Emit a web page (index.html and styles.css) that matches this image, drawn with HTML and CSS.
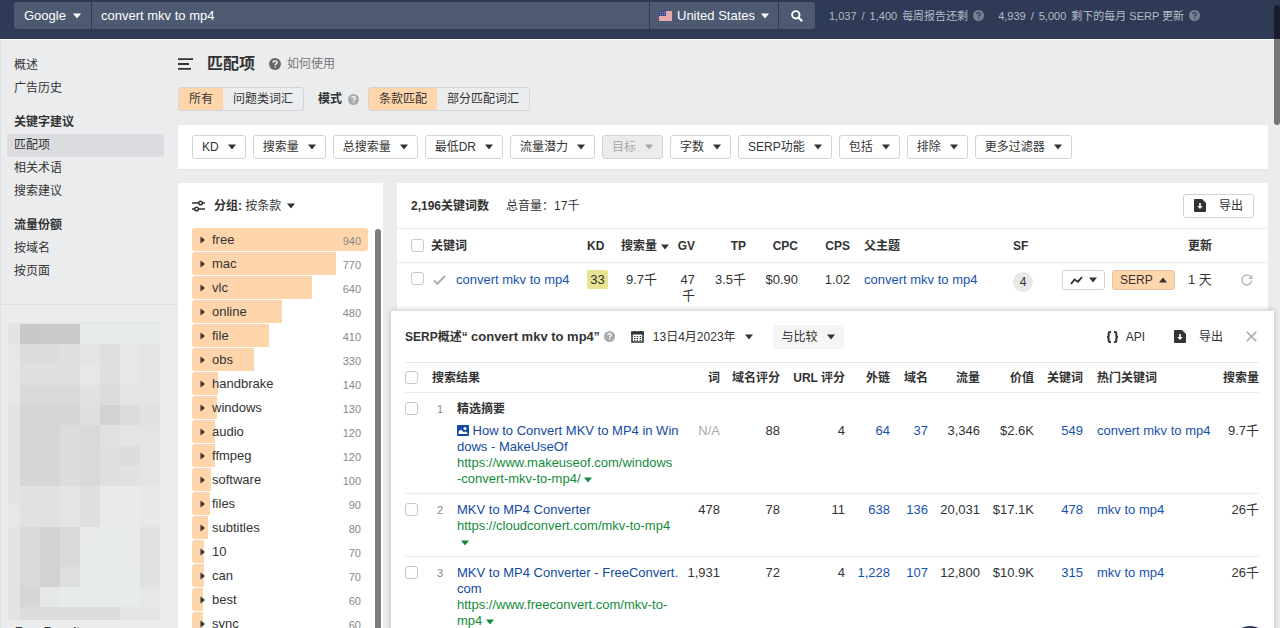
FILE: index.html
```html
<!DOCTYPE html>
<html lang="zh-CN">
<head>
<meta charset="utf-8">
<title>匹配项 - convert mkv to mp4</title>
<link rel="stylesheet" href="styles.css">
</head>
<body>
<svg class="defs" aria-hidden="true">
  <symbol id="down" viewBox="0 0 8 6"><path d="M0 0.5h8L4 5.5z" fill="currentColor"/></symbol>
  <symbol id="up" viewBox="0 0 8 6"><path d="M0 5.5h8L4 0.5z" fill="currentColor"/></symbol>
  <symbol id="right" viewBox="0 0 6 8"><path d="M0.5 0.5v7L5 4z" fill="currentColor"/></symbol>
  <symbol id="help" viewBox="0 0 12 12"><circle cx="6" cy="6" r="6" fill="currentColor" stroke="none"/><path d="M4.1 4.7C4.1 3.5 4.9 2.9 6 2.9s2 .7 2 1.7C8 5.8 6.2 5.9 6.2 7.2M6.2 8.2v1.4" fill="none" stroke-width="1.4"/></symbol>
  <symbol id="file" viewBox="0 0 12 13"><path d="M1 0h7l4 4v8q0 1-1 1H1q-1 0-1-1V1q0-1 1-1z" fill="currentColor"/><path d="M5.2 4h1.6v3h1.9L6 10 3.300 7h1.900z" fill="#fff"/></symbol>
</svg>
<div class="app">
  <header class="topbar">
    <form class="search">
      <label class="seg engine"><select aria-label="搜索引擎"><option>Google</option></select><svg class="caret"><use href="#down"/></svg></label>
      <input class="seg query" type="text" aria-label="关键词" value="convert mkv to mp4">
      <label class="seg country">
        <svg class="flag" viewBox="0 0 13 10"><path fill="#f3c4c8" d="M0 0h13v10H0z"/><path d="M0 1h13M0 3h13M0 5h13M0 7h13M0 9h13" stroke="#dc8690"/><path fill="#3d4c86" d="M0 0h7v5H0z"/><path d="M1 1.500h5M1 3.500h5" stroke="#8d98bd" stroke-dasharray="1 1"/></svg>
        <select aria-label="国家"><option>United States</option></select><svg class="caret"><use href="#down"/></svg>
      </label>
      <button class="seg go" type="button" aria-label="搜索"><svg width="12" height="12" viewBox="0 0 12 12"><circle cx="4.800" cy="4.800" r="3.700" fill="none" stroke="currentColor" stroke-width="1.900"/><path d="M7.500 7.500l3.700 3.700" stroke="currentColor" stroke-width="2.200"/></svg></button>
    </form>
    <div class="quota"><span>1,037</span><span>/</span><span>1,400</span><span>每周报告还剩</span><svg class="help"><use href="#help"/></svg></div>
    <div class="quota"><span>4,939</span><span>/</span><span>5,000</span><span>剩下的每月 SERP 更新</span><svg class="help"><use href="#help"/></svg></div>
  </header>
  <div class="body">
    <aside class="side">
      <nav>
        <a href="#">概述</a>
        <a href="#">广告历史</a>
        <h2>关键字建议</h2>
        <a href="#" class="on">匹配项</a>
        <a href="#">相关术语</a>
        <a href="#">搜索建议</a>
        <h2>流量份额</h2>
        <a href="#">按域名</a>
        <a href="#">按页面</a>
      </nav>
      <svg class="mosaic" viewBox="0 0 158 298" shape-rendering="crispEdges">
        <path fill="#e6e7e9" d="M0 0h152v298H0z"/>
        <path fill="#e2e3e5" d="M0 2h12v20H0zM0 83h12v100H0zM0 205h12v93H0z"/>
        <path fill="#e7ebec" d="M72 2h80v20H72zM72 205h60v80H72zM52 265h80v20H52z"/>
        <path fill="#c7c8ca" d="M12 2h20v20H12z"/><path fill="#cacbcd" d="M32 2h40v20H32z"/>
        <path fill="#dbdcde" d="M12 22h40v20H12zM92 63h20v20H92zM112 83h20v20H112zM112 124h20v20H112zM52 103h20v61H52zM12 285h100v13H12z"/>
        <path fill="#dedfe1" d="M52 22h20v41H52zM12 42h40v21H12zM92 22h20v41H92zM92 124h20v40H92zM72 164h20v41H72zM72 83h20v20H72zM52 245h20v20H52z"/>
        <path fill="#d8d9db" d="M12 63h60v20H12zM72 103h20v61H72zM12 205h20v60H12zM52 205h20v40H52z"/>
        <path fill="#d5d6d8" d="M12 83h40v81H12zM52 83h20v20H52zM12 265h20v20H12z"/>
        <path fill="#d1d2d4" d="M92 83h20v20H92zM32 205h20v60H32z"/>
        <path fill="#e0e1e3" d="M72 63h20v20H72zM132 83h20v20H132zM92 103h20v21H92zM12 164h40v41H12zM132 205h20v60H132zM112 144h20v20H112z"/>
        <path fill="#e3e4e6" d="M72 22h20v20H72zM132 22h20v61H132zM112 63h20v20H112zM112 103h20v21H112zM132 103h20v61H132zM52 164h20v41H52zM112 285h40v13H112z"/>
        <path fill="#e9eaec" d="M92 164h40v41H92zM72 205h20v20H72zM112 205h20v40H112z"/>
      </svg>
      <p class="foot">Free Results</p>
    </aside>
    <main class="main">
      <div class="title">
        <svg width="15" height="12" viewBox="0 0 15 12"><path d="M0 1.200h15M0 6h11M0 10.800h13" stroke="#333" stroke-width="1.800"/></svg>
        <h1>匹配项</h1>
        <a href="#"><svg class="help"><use href="#help"/></svg>如何使用</a>
      </div>
      <div class="modes">
        <div class="toggle"><button class="on" type="button">所有</button><button type="button">问题类词汇</button></div>
        <b>模式</b><svg class="help"><use href="#help"/></svg>
        <div class="toggle"><button class="on" type="button">条款匹配</button><button type="button">部分匹配词汇</button></div>
      </div>
      <div class="filters">
        <button class="btn" type="button">KD<svg class="caret"><use href="#down"/></svg></button>
        <button class="btn" type="button">搜索量<svg class="caret"><use href="#down"/></svg></button>
        <button class="btn" type="button">总搜索量<svg class="caret"><use href="#down"/></svg></button>
        <button class="btn" type="button">最低DR<svg class="caret"><use href="#down"/></svg></button>
        <button class="btn" type="button">流量潜力<svg class="caret"><use href="#down"/></svg></button>
        <button class="btn" type="button" disabled>目标<svg class="caret"><use href="#down"/></svg></button>
        <button class="btn" type="button">字数<svg class="caret"><use href="#down"/></svg></button>
        <button class="btn" type="button">SERP功能<svg class="caret"><use href="#down"/></svg></button>
        <button class="btn" type="button">包括<svg class="caret"><use href="#down"/></svg></button>
        <button class="btn" type="button">排除<svg class="caret"><use href="#down"/></svg></button>
        <button class="btn" type="button">更多过滤器<svg class="caret"><use href="#down"/></svg></button>
      </div>
      <div class="columns">
        <section class="groups">
          <button class="grouping" type="button"><svg width="13" height="12" viewBox="0 0 13 12"><path d="M0 3h13M0 9h13" stroke="#333" stroke-width="1.600"/><circle cx="8.500" cy="3" r="1.800" fill="#fff" stroke="#333" stroke-width="1.500"/><circle cx="4.500" cy="9" r="1.800" fill="#fff" stroke="#333" stroke-width="1.500"/></svg><span><b>分组:</b> 按条款</span><svg class="caret"><use href="#down"/></svg></button>
          <ul>
            <li><i style="width:100%"></i><svg class="tri"><use href="#right"/></svg><span>free</span><em>940</em></li>
            <li><i style="width:82%"></i><svg class="tri"><use href="#right"/></svg><span>mac</span><em>770</em></li>
            <li><i style="width:68%"></i><svg class="tri"><use href="#right"/></svg><span>vlc</span><em>640</em></li>
            <li><i style="width:51%"></i><svg class="tri"><use href="#right"/></svg><span>online</span><em>480</em></li>
            <li><i style="width:44%"></i><svg class="tri"><use href="#right"/></svg><span>file</span><em>410</em></li>
            <li><i style="width:35%"></i><svg class="tri"><use href="#right"/></svg><span>obs</span><em>330</em></li>
            <li><i style="width:15%"></i><svg class="tri"><use href="#right"/></svg><span>handbrake</span><em>140</em></li>
            <li><i style="width:14%"></i><svg class="tri"><use href="#right"/></svg><span>windows</span><em>130</em></li>
            <li><i style="width:13%"></i><svg class="tri"><use href="#right"/></svg><span>audio</span><em>120</em></li>
            <li><i style="width:13%"></i><svg class="tri"><use href="#right"/></svg><span>ffmpeg</span><em>120</em></li>
            <li><i style="width:11%"></i><svg class="tri"><use href="#right"/></svg><span>software</span><em>100</em></li>
            <li><i style="width:10%"></i><svg class="tri"><use href="#right"/></svg><span>files</span><em>90</em></li>
            <li><i style="width:9%"></i><svg class="tri"><use href="#right"/></svg><span>subtitles</span><em>80</em></li>
            <li><i style="width:7%"></i><svg class="tri"><use href="#right"/></svg><span>10</span><em>70</em></li>
            <li><i style="width:7%"></i><svg class="tri"><use href="#right"/></svg><span>can</span><em>70</em></li>
            <li><i style="width:6%"></i><svg class="tri"><use href="#right"/></svg><span>best</span><em>60</em></li>
            <li><i style="width:6%"></i><svg class="tri"><use href="#right"/></svg><span>sync</span><em>60</em></li>
          </ul>
          <div class="thumb"></div>
        </section>
        <section class="results">
          <div class="summary">
            <b>2,196关键词数</b><span>总音量：17千</span>
            <button class="btn export" type="button"><svg class="file"><use href="#file"/></svg>导出</button>
          </div>
          <table class="keywords">
            <colgroup><col class="w34"><col class="w156"><col class="w28"><col class="w54"><col class="w26"><col class="w51"><col class="w52"><col class="w52"><col><col class="w49"><col class="w126"><col class="w53"><col class="w27"></colgroup>
            <thead><tr>
              <th class="pick"><input type="checkbox" aria-label="全选"></th><th>关键词</th><th>KD</th><th class="r">搜索量<svg class="caret"><use href="#down"/></svg></th><th class="r">GV</th><th class="r">TP</th><th class="r">CPC</th><th class="r">CPS</th><th class="parent">父主题</th><th>SF</th><th></th><th>更新</th><th></th>
            </tr></thead>
            <tbody><tr>
              <td class="pick"><input type="checkbox" aria-label="选择 convert mkv to mp4"></td>
              <td><div class="kw"><svg width="13" height="10" viewBox="0 0 13 10"><path d="M1 5.500L4.300 8.800L12 1" fill="none" stroke="#aaa" stroke-width="1.900"/></svg><a href="#">convert mkv to mp4</a></div></td>
              <td><span class="kd">33</span></td>
              <td class="r vol">9.7千</td><td class="r gv">47千</td><td class="r">3.5千</td><td class="r">$0.90</td><td class="r">1.02</td>
              <td class="parent"><a href="#">convert mkv to mp4</a></td>
              <td><span class="sf">4</span></td>
              <td><div class="acts"><button class="btn small" type="button" aria-label="趋势"><svg width="13" height="9" viewBox="0 0 13 9"><path d="M1 8L4.500 3.500L8 5.700L12 1" fill="none" stroke="#333" stroke-width="1.900"/></svg><svg class="caret"><use href="#down"/></svg></button><button class="btn small serp-on" type="button">SERP<svg class="caret"><use href="#up"/></svg></button></div></td>
              <td>1 天</td>
              <td><button class="plain" type="button" aria-label="刷新"><svg width="12" height="12" viewBox="0 0 12 12"><path d="M10.700 6.700A4.900 4.900 0 1 1 9.600 2.800" fill="none" stroke="#bbb" stroke-width="1.500"/><path d="M11.500 0.500v4.500H7z" fill="#bbb"/></svg></button></td>
            </tr></tbody>
          </table>
          <section class="serp">
            <div class="serp-head">
              <h2>SERP概述“ <strong>convert mkv to mp4</strong>”</h2><svg class="help"><use href="#help"/></svg>
              <button class="plain date" type="button"><svg width="13" height="12" viewBox="0 0 13 12"><path d="M1 1h11v10H1z" fill="none" stroke="#333" stroke-width="1.600"/><path d="M0 1h13v2.500H0zM2.500 0h2v2h-2zM8.500 0h2v2h-2z" fill="#333"/><path d="M3 5.500h7M3 7.500h7M3 9.300h7" stroke="#333" stroke-dasharray="1.400 1.400"/></svg>13日4月2023年<svg class="caret"><use href="#down"/></svg></button>
              <button class="plain compare" type="button">与比较<svg class="caret"><use href="#down"/></svg></button>
              <button class="plain api" type="button"><svg width="13" height="12" viewBox="0 0 13 12"><path d="M5 1H4Q2.700 1 2.700 2.300V4.500Q2.700 6 1 6Q2.700 6 2.700 7.500V9.700Q2.700 11 4 11H5M8 1H9Q10.300 1 10.300 2.300V4.500Q10.300 6 12 6Q10.300 6 10.300 7.500V9.700Q10.300 11 9 11H8" fill="none" stroke="#333" stroke-width="2"/></svg>API</button>
              <button class="plain out" type="button"><svg class="file"><use href="#file"/></svg>导出</button>
              <button class="plain close" type="button" aria-label="关闭"><svg width="11" height="11" viewBox="0 0 11 11"><path d="M.7.7l9.600 9.600M10.300.7L.7 10.300" stroke="#aaa" stroke-width="1.600"/></svg></button>
            </div>
            <table class="pages">
              <colgroup><col class="w27"><col class="w25"><col><col class="w45"><col class="w60"><col class="w65"><col class="w45"><col class="w38"><col class="w52"><col class="w54"><col class="w49"><col class="w132"><col class="w44"></colgroup>
              <thead><tr><th><input type="checkbox" aria-label="全选结果"></th><th colspan="2">搜索结果</th><th>词</th><th>域名评分</th><th>URL 评分</th><th>外链</th><th>域名</th><th>流量</th><th>价值</th><th>关键词</th><th class="top">热门关键词</th><th>搜索量</th></tr></thead>
              <tbody>
                <tr class="featured"><td class="lead"><input type="checkbox" aria-label="选择结果 1"></td><td class="lead num">1</td>
                  <td class="lead page"><b>精选摘要</b><a href="#"><svg width="12" height="11" viewBox="0 0 12 11"><path d="M1 0h10q1 0 1 1v9q0 1-1 1H1q-1 0-1-1V1q0-1 1-1z" fill="#124a9f"/><circle cx="8" cy="3.500" r="1.500" fill="#fff"/><path d="M1.500 9V6.500l2.500-2 3 3 1.500-1.200 2 1.700v1z" fill="#fff"/></svg> How to Convert MKV to MP4 in Win<br>dows - MakeUseOf</a><a class="url" href="#">https://www.makeuseof.com/windows<br>-convert-mkv-to-mp4/ <svg class="caret"><use href="#down"/></svg></a></td>
                  <td class="na">N/A</td><td>88</td><td>4</td><td><a href="#">64</a></td><td><a href="#">37</a></td><td>3,346</td><td>$2.6K</td><td><a href="#">549</a></td><td class="top"><a href="#">convert mkv to mp4</a></td><td>9.7千</td></tr>
                <tr><td class="lead"><input type="checkbox" aria-label="选择结果 2"></td><td class="num">2</td>
                  <td class="page"><a href="#">MKV to MP4 Converter</a><a class="url" href="#">https://cloudconvert.com/mkv-to-mp4<br>&nbsp;<svg class="caret"><use href="#down"/></svg></a></td>
                  <td>478</td><td>78</td><td>11</td><td><a href="#">638</a></td><td><a href="#">136</a></td><td>20,031</td><td>$17.1K</td><td><a href="#">478</a></td><td class="top"><a href="#">mkv to mp4</a></td><td>26千</td></tr>
                <tr><td class="lead"><input type="checkbox" aria-label="选择结果 3"></td><td class="num">3</td>
                  <td class="page"><a href="#">MKV to MP4 Converter - FreeConvert.<br>com</a><a class="url" href="#">https://www.freeconvert.com/mkv-to-<br>mp4 <svg class="caret"><use href="#down"/></svg></a></td>
                  <td>1,931</td><td>72</td><td>4</td><td><a href="#">1,228</a></td><td><a href="#">107</a></td><td>12,800</td><td>$10.9K</td><td><a href="#">315</a></td><td class="top"><a href="#">mkv to mp4</a></td><td>26千</td></tr>
              </tbody>
            </table>
          </section>
        </section>
      </div>
    </main>
  </div>
  <div class="page-thumb"></div>
  <button class="chat" type="button" aria-label="聊天"></button>
</div>
</body>
</html>
```
FILE: styles.css
```css
* { box-sizing: border-box; }
body { margin: 0; font: 12px/16px "Liberation Sans", "Noto Sans CJK SC", sans-serif; color: #333; background: #ebecee; }
h1, h2, p, ul { margin: 0; padding: 0; }
button, input, select { font: inherit; color: inherit; margin: 0; }
button { cursor: pointer; }
a { color: #1752ae; text-decoration: none; }
svg { flex: none; }
.defs { display: none; }
.caret { width: 8px; height: 6px; }
.help { width: 11px; height: 11px; color: #aaa; stroke: #fff; }
.file { width: 12px; height: 13px; }
.app { position: relative; display: flex; flex-direction: column; height: 100vh; overflow: hidden; }

.topbar { display: flex; align-items: flex-start; gap: 14px; height: 40px; padding: 2px 14px 0; background: #2f3b56; border-bottom: 1px solid #fafafa; flex: none; color: #b5bac7; }
.search { display: flex; flex: 0 1 801px; gap: 1px; height: 27px; color: #fff; font-size: 13px; }
.seg { display: flex; align-items: center; background: #4e5a71; border: 0; border-radius: 0; }
.seg select { appearance: none; background: none; border: 0; padding: 0; outline: 0; }
.engine { gap: 7px; padding: 0 10px; border-radius: 3px 0 0 3px; }
.query { flex: 1; min-width: 0; padding: 0 9px; }
.country { gap: 5px; padding: 0 9px; }
.flag { width: 13px; height: 10px; }
.go { width: 36px; justify-content: center; padding: 0; border-radius: 0 3px 3px 0; }
.quota { display: flex; align-items: center; gap: 5px; height: 27px; font-size: 11px; white-space: nowrap; }
.quota .help { color: #777f92; stroke: #2f3b56; }

.body { display: flex; flex: 1; min-height: 0; }
.side { width: 178px; flex: none; border-left: 1px solid #dfe0e3; display: flex; flex-direction: column; }
.side nav { padding: 14px 14px 21px 6px; border-bottom: 1px solid #dcdde0; }
.side a, .side h2 { display: block; padding-left: 7px; font-size: 12px; line-height: 23px; color: #333; border-radius: 3px; }
.side h2 { margin-top: 11px; }
.side .on { background: #dcdde1; }
.mosaic { width: 158px; height: 298px; margin: 17px 7px 0; }
.foot { padding: 4px 14px; font-weight: bold; white-space: nowrap; }

.main { flex: 1; min-width: 0; padding: 13px 12px 0 0; display: flex; flex-direction: column; }
.title { display: flex; align-items: center; height: 22px; gap: 14px; }
.title h1 { font-size: 16px; line-height: 22px; }
.title a { display: flex; align-items: center; gap: 6px; color: #777; }
.title .help { width: 12px; height: 12px; color: #666; }
.modes { display: flex; align-items: center; margin-top: 12px; }
.modes b { margin: 0 6px 0 14px; }
.modes > .help { margin-right: 9px; }
.toggle { display: flex; height: 24px; border: 1px solid #d3d4d7; border-radius: 3px; overflow: hidden; }
.toggle button { border: 0; background: none; padding: 0 10px; }
.toggle .on { background: #ffd6ac; }
.filters { display: flex; gap: 7px; margin-top: 14px; padding: 10px 14px; height: 45px; background: #fff; border-bottom: 1px solid #e3e4e6; }
.btn { display: flex; align-items: center; gap: 9px; height: 24px; padding: 0 9px; background: #fff; border: 1px solid #d3d3d3; border-radius: 3px; white-space: nowrap; }
.btn:disabled { background: #ebecee; color: #aaa; }

.columns { display: flex; flex: 1; min-height: 0; gap: 14px; margin-top: 13px; }
.groups { position: relative; width: 205px; flex: none; background: #fff; padding: 0 15px 0 14px; overflow: hidden; }
.grouping { display: flex; align-items: center; gap: 8px; width: 100%; height: 45px; padding: 0; border: 0; background: none; }
.grouping .caret { margin-left: -2px; }
.grouping > svg:first-child { margin-right: 1px; }
.groups li { position: relative; display: flex; align-items: center; gap: 6px; height: 23px; margin-bottom: 1px; padding: 0 7px 0 8px; font-size: 13px; }
.groups i { position: absolute; left: 0; top: 0; bottom: 0; background: #ffd6ac; border-radius: 3px 0 0 3px; }
.groups li:first-child i { border-radius: 3px; }
.groups li > :not(i) { position: relative; }
.groups em { margin-left: auto; padding-top: 3px; font-style: normal; font-size: 11px; color: #888; }
.tri { width: 6px; height: 8px; }
.thumb { position: absolute; right: 2px; top: 46px; width: 6px; height: 600px; border-radius: 3px; background: #7d7d7d; }

.results { flex: 1; min-width: 0; background: #fff; }
.summary { display: flex; align-items: center; gap: 17px; height: 45px; padding: 0 14px; }
.export { margin-left: auto; gap: 13px; padding: 0 10px; }
table { width: 100%; table-layout: fixed; border-collapse: separate; border-spacing: 0; }
th, td { padding: 0; text-align: left; white-space: nowrap; }
td { vertical-align: top; font-size: 13px; }
.r { text-align: right; }
input[type=checkbox] { appearance: none; display: block; width: 13px; height: 13px; border: 1px solid #c8c8c8; border-radius: 3px; background: #fff; }
.keywords th { height: 35px; border-top: 1px solid #ececec; border-bottom: 1px solid #ececec; }
.keywords th .caret { margin-left: 4px; }
.keywords td { padding-top: 9px; height: 47px; }
.keywords .pick { padding-left: 14px; }
.keywords .parent { padding-left: 14px; }
.keywords .vol { padding-right: 12px; }
.keywords .gv { padding-left: 8px; white-space: normal; }
.kw { display: flex; align-items: center; gap: 10px; padding-left: 2px; }
.kd { display: block; width: 21px; height: 19px; margin-top: -2px; line-height: 19px; text-align: center; background: #e6e391; border-radius: 2px; }
.sf { display: block; width: 20px; height: 20px; border-radius: 10px; line-height: 20px; text-align: center; background: #e8e8e8; font-size: 12px; }
.acts { display: flex; gap: 7px; margin-top: -2px; font-size: 12px; }
.small { height: 20px; padding: 0 7px; gap: 6px; }
.serp-on { background: #ffd6ac; border-color: #e8c49d; }
.plain { display: flex; align-items: center; border: 0; background: none; padding: 0; white-space: nowrap; }
.keywords .plain { margin-top: 2px; }

.serp { position: relative; margin: 0 -6px; padding: 0 15px 0 14px; background: #fff; border-top: 1px solid #ddd; box-shadow: 0 0 6px rgba(0, 0, 0, .2); }
.serp-head { display: flex; align-items: center; height: 51px; }
.serp-head h2 { font-size: 12px; white-space: nowrap; }
.serp-head strong { font-size: 13px; }
.serp-head > .help { margin-left: 4px; }
.date { margin-left: 16px; gap: 9px; }
.compare { margin-left: 20px; padding: 0 9px; gap: 9px; height: 24px; background: #f5f5f5; border-radius: 3px; }
.api { margin-left: auto; gap: 7px; }
.out { margin-left: 29px; gap: 13px; }
.close { margin: 0 2px 0 23px; }
.pages th { height: 31px; text-align: right; border-top: 1px solid #e8e8e8; border-bottom: 1px solid #ececec; }
.pages th:nth-child(2) { text-align: left; }
.pages td { padding: 8px 0 6px; text-align: right; border-bottom: 1px solid #ececec; }
.pages tr .top { padding-left: 14px; text-align: left; }
.pages .lead:first-child { padding-top: 9px; }
.pages .num { text-align: left; padding-left: 5px; font-size: 11px; color: #888; }
.pages .page { text-align: left; }
.page b { display: block; margin-bottom: 6px; font-size: 12px; }
.page a { display: block; color: #124a9f; }
.page a > svg { vertical-align: -1px; }
.page .url { color: #148c3c; }
.page .url .caret { vertical-align: 0; }
.featured td:not(.lead) { padding-top: 30px; }
.pages .na { color: #aaa; }
.w25 { width: 25px; } .w26 { width: 26px; } .w27 { width: 27px; } .w28 { width: 28px; } .w34 { width: 34px; }
.w38 { width: 38px; } .w44 { width: 44px; } .w45 { width: 45px; } .w49 { width: 49px; } .w51 { width: 51px; }
.w52 { width: 52px; } .w53 { width: 53px; } .w54 { width: 54px; } .w60 { width: 60px; } .w65 { width: 65px; }
.w126 { width: 126px; } .w132 { width: 132px; } .w156 { width: 156px; }

.page-thumb { position: absolute; top: 5px; right: 0; width: 6px; height: 120px; border-radius: 3px; background: rgba(0, 0, 0, .5); }
.chat { position: absolute; right: 8px; bottom: -42px; width: 44px; height: 44px; border: 0; border-radius: 22px; background: #2f3b56; }
```
